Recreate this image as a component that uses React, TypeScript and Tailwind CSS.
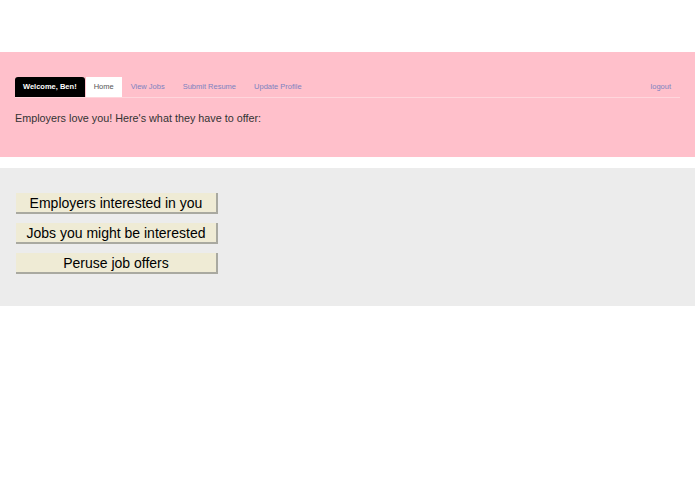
export default function App() {
  const links = ["View Jobs", "Submit Resume", "Update Profile"];
  const buttons = ["Employers interested in you", "Jobs you might be interested", "Peruse job offers"];

  return (
    <div className="min-h-[494px] bg-white font-['Liberation_Sans',Arial,sans-serif]">
      <div className="h-[52px]" />
      <div className="bg-[#ffc0cb] px-[15px] pt-[25px] pb-[32px]">
        <div className="flex items-end border-b border-[#ffd6dc]">
          <span className="flex h-[20px] items-center rounded-t-[3px] bg-black px-[8px] text-[7.5px] font-bold text-white">Welcome, Ben!</span>
          <span className="ml-px flex h-[20px] items-center bg-white px-[8px] text-[7.5px] text-[#555]">Home</span>
          {links.map((l) => (
            <span key={l} className="flex h-[20px] items-center px-[9px] text-[7.5px] text-[#7d82c0]">{l}</span>
          ))}
          <span className="ml-auto flex h-[20px] items-center pr-[9px] text-[7.5px] text-[#7d82c0]">logout</span>
        </div>
        <p className="mt-[13px] text-[10.8px] leading-[14px] text-[#333]">Employers love you! Here's what they have to offer:</p>
      </div>
      <div className="mt-[11px] flex flex-col gap-[9px] bg-[#ececec] px-[16px] pt-[25px] pb-[32px]">
        {buttons.map((b) => (
          <div
            key={b}
            className="flex h-[21px] w-[202px] items-center justify-center border-r-2 border-b-2 border-[#a9a9a0] bg-[#efebd5] text-[14px] leading-none text-black"
          >
            {b}
          </div>
        ))}
      </div>
    </div>
  );
}
